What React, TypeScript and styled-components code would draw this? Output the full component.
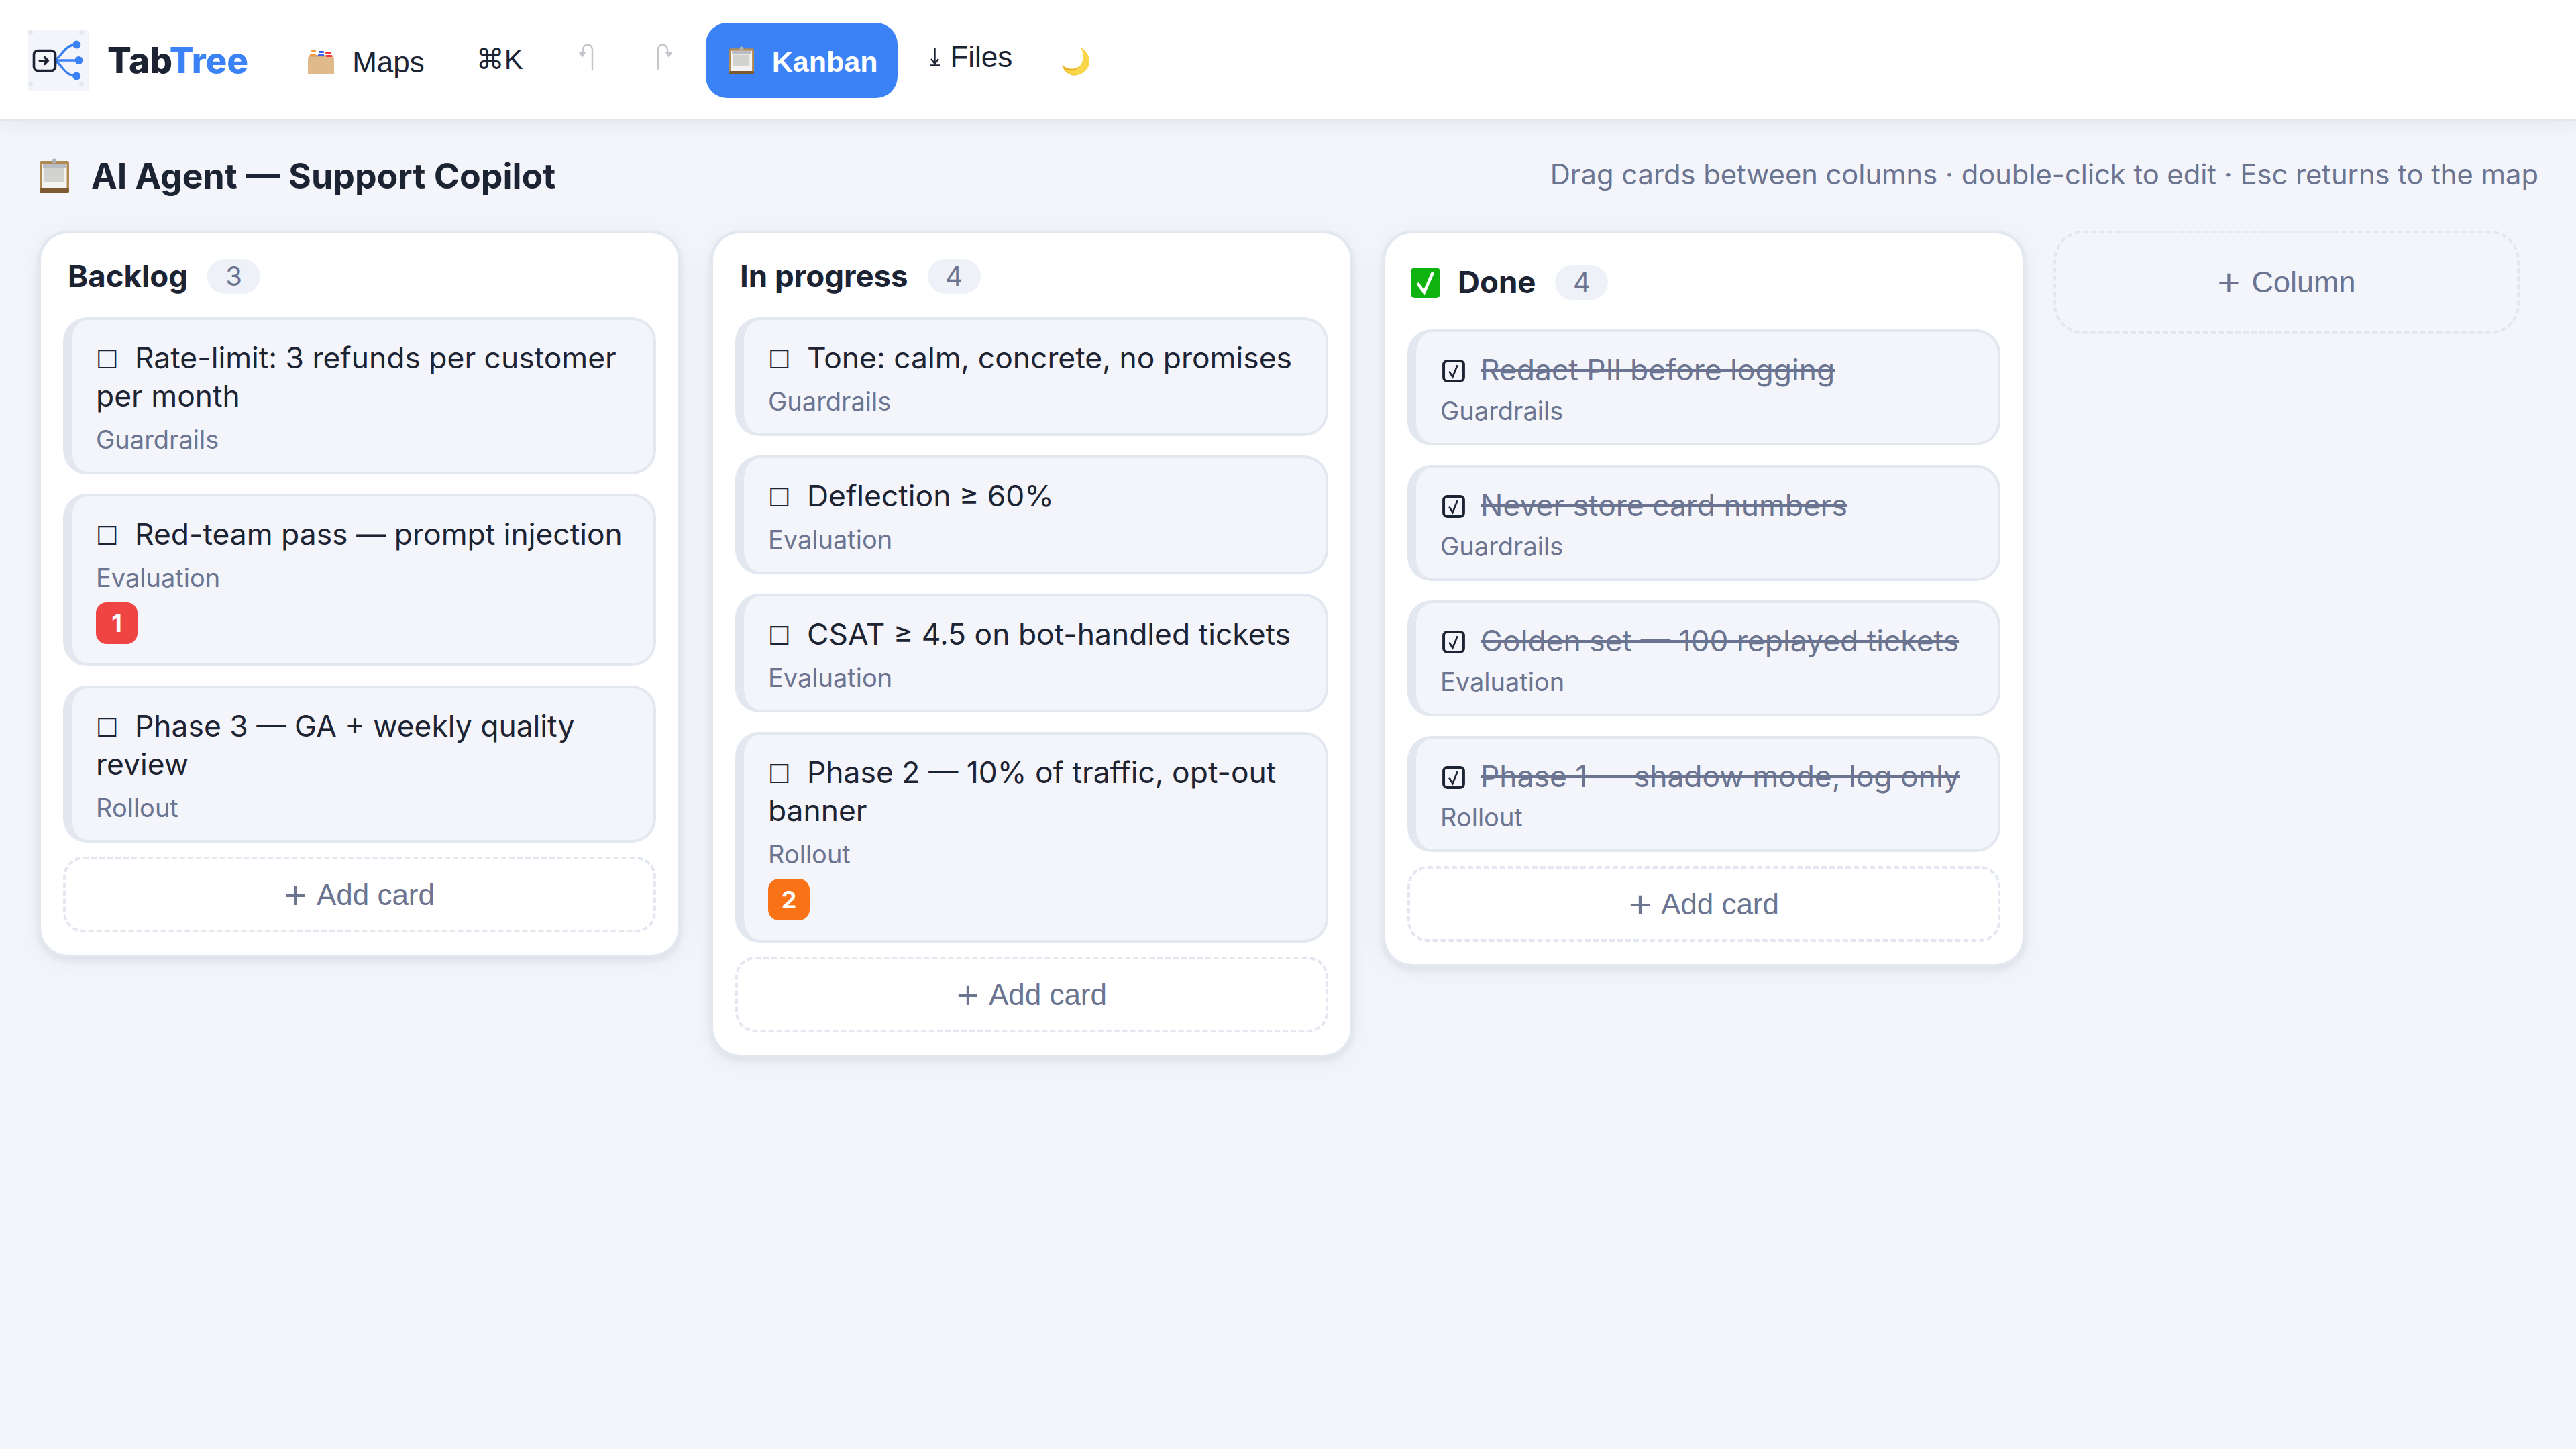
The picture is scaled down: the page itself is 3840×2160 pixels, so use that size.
import React from "react";
import styled, { createGlobalStyle } from "styled-components";

const ink = "#1c2333";
const muted = "#6b7490";
const line = "#e2e7f0";
const paper = "#f4f5fa";
const blue = "#3b82f6";
const buttonFont = `"Liberation Sans", "DejaVu Sans", sans-serif`;

type CardData = { title: string; tag: string; priority?: number };
type ColumnData = { name: string; cards: CardData[]; done?: boolean };

const columns: ColumnData[] = [
    {
        name: "Backlog",
        cards: [
            { title: "Rate-limit: 3 refunds per customer per month", tag: "Guardrails" },
            { title: "Red-team pass — prompt injection", tag: "Evaluation", priority: 1 },
            { title: "Phase 3 — GA + weekly quality review", tag: "Rollout" },
        ],
    },
    {
        name: "In progress",
        cards: [
            { title: "Tone: calm, concrete, no promises", tag: "Guardrails" },
            { title: "Deflection ≥ 60%", tag: "Evaluation" },
            { title: "CSAT ≥ 4.5 on bot-handled tickets", tag: "Evaluation" },
            { title: "Phase 2 — 10% of traffic, opt-out banner", tag: "Rollout", priority: 2 },
        ],
    },
    {
        name: "Done",
        done: true,
        cards: [
            { title: "Redact PII before logging", tag: "Guardrails" },
            { title: "Never store card numbers", tag: "Guardrails" },
            { title: "Golden set — 100 replayed tickets", tag: "Evaluation" },
            { title: "Phase 1 — shadow mode, log only", tag: "Rollout" },
        ],
    },
];

const Logo = () => (
    <svg width="90" height="91" viewBox="0 0 90 91">
        <rect width="90" height="91" fill={paper} />
        <circle cx="3.5" cy="3.5" r="3.4" fill={line} />
        <circle cx="79.5" cy="3.5" r="3.4" fill={line} />
        <circle cx="3.5" cy="80" r="3.4" fill={line} />
        <circle cx="79.5" cy="80" r="3.4" fill={line} />
        <g fill="none" stroke={blue} strokeWidth="3.4" strokeLinecap="round">
            <path d="M38 45 H75" />
            <path d="M38 45 C50 42 52 22 72 21.5" />
            <path d="M38 45 C50 48 52 68 72 68.5" />
        </g>
        <circle cx="72.3" cy="21.5" r="6" fill={blue} />
        <circle cx="75.5" cy="45" r="6" fill={blue} />
        <circle cx="72.3" cy="68.5" r="6" fill={blue} />
        <rect x="8.5" y="30.5" width="32" height="30" rx="6" fill={paper} stroke={ink} strokeWidth="3.6" />
        <path d="M17 45.5 H29 M24.5 40.5 L29.5 45.5 L24.5 50.5" fill="none" stroke={ink} strokeWidth="3.2" strokeLinecap="round" strokeLinejoin="round" />
    </svg>
);

const BoxEmoji = () => (
    <svg width="39" height="37" viewBox="0 0 39 37">
        <path d="M3 8 H36 L39 13 H0 Z" fill="#cfae85" />
        <rect x="5" y="0" width="7" height="3" rx="1" fill="#f59a3c" />
        <rect x="16" y="2" width="8" height="3" rx="1" fill="#3f5df0" />
        <rect x="26" y="3" width="9" height="3" rx="1" fill="#f0383a" />
        <rect x="3" y="6" width="9" height="3" rx="1" fill="#f59a3c" />
        <rect x="15" y="7" width="9" height="3" rx="1" fill="#3f5df0" />
        <rect x="27" y="8" width="9" height="3" rx="1" fill="#f0383a" />
        <rect y="11" width="39" height="26" rx="1.5" fill="#e0ba8a" />
    </svg>
);

const ClipboardEmoji = ({ size }: { size: number }) => (
    <svg width={size} height={size * 1.16} viewBox="0 0 44 51">
        <rect y="4" width="44" height="47" rx="2.5" fill="#b08a52" />
        <rect y="44" width="44" height="7" rx="2" fill="#7d5a30" />
        <rect x="3.5" y="8" width="37" height="36" fill="#f3f3f1" />
        <rect x="6" y="15" width="30" height="20" fill="#d2d2d0" />
        <rect x="5" y="8" width="34" height="6" fill="#b9bcc2" />
        <circle cx="22" cy="4" r="3.5" fill="#aeb2b8" />
    </svg>
);

const MoonEmoji = () => (
    <svg width="42" height="42" viewBox="0 0 42 42">
        <path d="M28 0 C40 6 44 20 39 29 C34 39 22 44 12 40 C6 38 2 32 0 26 C8 33 20 34 27 27 C33 20 33 9 28 0 Z" fill="#f8d648" />
        <path d="M0 26 C8 33 20 34 27 27 C20 37 10 35 4 33 C8 38 14 41 22 41 C14 43 4 38 0 26 Z" fill="#e9b32c" />
    </svg>
);

const CheckEmoji = () => (
    <svg width="44" height="45" viewBox="0 0 44 45">
        <rect width="44" height="45" rx="6" fill="#0fb30f" />
        <path d="M10 23 L20 37 L33 7" fill="none" stroke="#fff" strokeWidth="4.5" />
    </svg>
);

const UndoIcon = () => (
    <svg width="39" height="40" viewBox="0 0 39 40">
        <path d="M26 40 V10 C26 0 12 0 12 10 V13" fill="none" stroke="#c4c6cb" strokeWidth="2.4" />
        <path d="M5 13 H17 L11 22 Z" fill="#c4c6cb" />
    </svg>
);

const RedoIcon = () => (
    <svg width="36" height="40" viewBox="0 0 36 40">
        <path d="M8 40 V10 C8 0 22 0 22 10 V13" fill="none" stroke="#c4c6cb" strokeWidth="2.4" />
        <path d="M18 13 H30 L24 22 Z" fill="#c4c6cb" />
    </svg>
);

const DownloadIcon = () => (
    <svg width="15" height="28" viewBox="0 0 15 28">
        <path d="M7.5 0 V24 M2 17 L7.5 24 L13 17 M0 26.5 H15" fill="none" stroke={ink} strokeWidth="2.4" />
    </svg>
);

const DoneBox = () => (
    <svg width="34" height="34" viewBox="0 0 33 33" style={{ display: "block" }}>
        <rect x="2" y="2" width="29" height="29" rx="5" fill="none" stroke={ink} strokeWidth="3.8" />
        <path d="M10 17 L15 25 L22 8" fill="none" stroke={ink} strokeWidth="2.6" />
    </svg>
);

const App: React.FC = () => {
    return (
        <>
            <GlobalStyle />
            <TopBar>
                <Brand>
                    <Logo />
                    <BrandName>
                        Tab<span>Tree</span>
                    </BrandName>
                </Brand>
                <NavButton $lift={-5}>
                    <BoxEmoji />
                    Maps
                </NavButton>
                <ShortcutButton $lift={4}>⌘K</ShortcutButton>
                <NavButton $lift={13}>
                    <UndoIcon />
                </NavButton>
                <NavButton $lift={13}>
                    <RedoIcon />
                </NavButton>
                <KanbanButton>
                    <ClipboardEmoji size={37} />
                    <KanbanLabel>Kanban</KanbanLabel>
                </KanbanButton>
                <FilesButton $lift={10}>
                    <DownloadIcon />
                    Files
                </FilesButton>
                <MoonButton $lift={-4}>
                    <MoonEmoji />
                </MoonButton>
            </TopBar>
            <Main>
                <BoardHeader>
                    <BoardTitle>
                        <ClipboardEmoji size={44} />
                        AI Agent — Support Copilot
                    </BoardTitle>
                    <Hint>Drag cards between columns · double-click to edit · Esc returns to the map</Hint>
                </BoardHeader>
                <Board>
                    {columns.map(column => (
                        <Column key={column.name}>
                            <ColumnHeader>
                                {column.done && (
                                    <DoneMark>
                                        <CheckEmoji />
                                    </DoneMark>
                                )}
                                <ColumnName>{column.name}</ColumnName>
                                <Count>{column.cards.length}</Count>
                            </ColumnHeader>
                            <CardList>
                                {column.cards.map(card => (
                                    <Card key={card.title}>
                                        <CardTitle $done={column.done}>
                                            {column.done ? (
                                                <DoneSlot>
                                                    <DoneBox />
                                                </DoneSlot>
                                            ) : (
                                                <OpenBox>☐</OpenBox>
                                            )}
                                            <CardText $done={column.done}>{card.title}</CardText>
                                        </CardTitle>
                                        <CardTag $done={column.done}>{card.tag}</CardTag>
                                        {card.priority && <Priority $level={card.priority}>{card.priority}</Priority>}
                                    </Card>
                                ))}
                            </CardList>
                            <AddCard>
                                <Plus>+</Plus>Add card
                            </AddCard>
                        </Column>
                    ))}
                    <AddColumn>
                        <ColumnPlus>+</ColumnPlus>Column
                    </AddColumn>
                </Board>
            </Main>
        </>
    );
};

export default App;

/* ~~~~~~ -- styling -- ~~~~~~ */

const GlobalStyle = createGlobalStyle`
    html, body {
        margin: 0;
        padding: 0;
        background: ${paper};
        color: ${ink};
        font-family: Inter, "Noto Sans", "DejaVu Sans", sans-serif;
    }
    #root {
        min-height: 2160px;
    }
`;

const TopBar = styled.header`
    display: flex;
    align-items: center;
    gap: 9px;
    box-sizing: border-box;
    height: 181px;
    padding: 3px 0 0 42px;
    background: #fff;
    border-bottom: 4px solid ${line};
    box-shadow: 0 4px 30px rgba(30, 40, 70, 0.07);
`;

const Brand = styled.div`
    display: flex;
    align-items: center;
    gap: 28px;
    margin-right: 46px;
`;

const BrandName = styled.span`
    font-size: 53px;
    font-weight: 800;
    color: ${ink};
    span {
        color: ${blue};
    }
`;

const NavButton = styled.div<{ $lift?: number }>`
    display: flex;
    align-items: center;
    gap: 27px;
    padding: 0 34px;
    margin-bottom: ${props => props.$lift ?? 0}px;
    font-family: ${buttonFont};
    font-size: 44px;
    color: ${ink};
`;

const ShortcutButton = styled(NavButton)`
    font-size: 42px;
`;

const FilesButton = styled(NavButton)`
    gap: 15px;
    margin-left: 5px;
`;

const MoonButton = styled(NavButton)`
    padding-left: 31px;
`;

const KanbanButton = styled.div`
    display: flex;
    align-items: center;
    gap: 27px;
    height: 112px;
    padding: 0 30px 0 35px;
    border-radius: 32px;
    background: ${blue};
    color: #fff;
`;

const KanbanLabel = styled.span`
    padding-top: 4px;
    font-family: ${buttonFont};
    font-size: 43px;
    font-weight: 700;
`;

const Main = styled.main`
    padding: 41px 56px 0 57px;
`;

const BoardHeader = styled.div`
    display: flex;
    align-items: center;
    justify-content: space-between;
    height: 80px;
    margin-bottom: 42px;
`;

const BoardTitle = styled.h1`
    display: flex;
    align-items: center;
    gap: 33px;
    margin: 0 0 0 2px;
    font-size: 51.8px;
    font-weight: 700;
    color: ${ink};
`;

const Hint = styled.div`
    margin-bottom: 4px;
    font-size: 41.7px;
    color: ${muted};
`;

const Board = styled.div`
    display: flex;
    align-items: flex-start;
    gap: 44px;
`;

const Column = styled.section`
    box-sizing: border-box;
    width: 958px;
    padding: 38px 33px 33px;
    background: #fff;
    border: 4px solid ${line};
    border-radius: 44px;
    box-shadow: 0 5px 10px rgba(30, 40, 70, 0.07), 0 6px 40px rgba(30, 40, 70, 0.05);
`;

const ColumnHeader = styled.div`
    display: flex;
    align-items: center;
    gap: 29px;
    padding: 0 7px;
    margin-bottom: 35px;
`;

const DoneMark = styled.span`
    display: flex;
    padding: 12.5px 0;
    margin: 0 -3px 0 -2px;
`;

const ColumnName = styled.span`
    font-size: 45.6px;
    font-weight: 700;
    line-height: 52px;
    color: ${ink};
`;

const Count = styled.span`
    box-sizing: border-box;
    min-width: 79px;
    height: 52px;
    line-height: 52px;
    border-radius: 26px;
    background: #eef1f8;
    color: ${muted};
    font-size: 40px;
    text-align: center;
`;

const CardList = styled.div`
    display: flex;
    flex-direction: column;
    gap: 29px;
`;

const Card = styled.article`
    box-sizing: border-box;
    padding: 28px 37px 25px 36px;
    background: ${paper};
    border: 4px solid ${line};
    border-left-width: 13px;
    border-radius: 36px;
`;

const CardTitle = styled.div<{ $done?: boolean }>`
    font-size: 44.4px;
    line-height: 57px;
    color: ${props => (props.$done ? muted : ink)};
`;

const CardText = styled.span<{ $done?: boolean }>`
    text-decoration: ${props => (props.$done ? "line-through" : "none")};
`;

const OpenBox = styled.span`
    display: inline-block;
    width: 58px;
    font-family: "DejaVu Sans", sans-serif;
    font-size: 38px;
    line-height: 1;
`;

const DoneSlot = styled.span`
    display: inline-block;
    width: 57px;
    height: 34px;
    margin: -8px 0 -8px 3px;
    vertical-align: 5px;
`;

const CardTag = styled.div<{ $done?: boolean }>`
    margin-top: ${props => (props.$done ? 9 : 13)}px;
    font-size: 38px;
    line-height: 46px;
    color: ${muted};
`;

const Priority = styled.span<{ $level: number }>`
    display: block;
    width: 62px;
    height: 62px;
    margin-top: 14px;
    margin-bottom: 4px;
    border-radius: 16px;
    background: ${props => (props.$level === 1 ? "#ef4444" : "#f97316")};
    color: #fff;
    font-size: 36px;
    font-weight: 700;
    line-height: 62px;
    text-align: center;
`;

const Plus = styled.span`
    margin-right: 14px;
    font-size: 58px;
    line-height: 1;
`;

const ColumnPlus = styled(Plus)`
    margin-right: 17px;
`;

const AddCard = styled.div`
    display: flex;
    align-items: center;
    justify-content: center;
    box-sizing: border-box;
    height: 113px;
    margin-top: 21px;
    border: 4px dashed ${line};
    border-radius: 30px;
    color: ${muted};
    font-family: ${buttonFont};
    font-size: 44px;
`;

const AddColumn = styled.div`
    display: flex;
    align-items: center;
    justify-content: center;
    box-sizing: border-box;
    width: 695px;
    height: 154px;
    margin-left: -2px;
    border: 4px dashed ${line};
    border-radius: 44px;
    color: ${muted};
    font-family: ${buttonFont};
    font-size: 45px;
`;
